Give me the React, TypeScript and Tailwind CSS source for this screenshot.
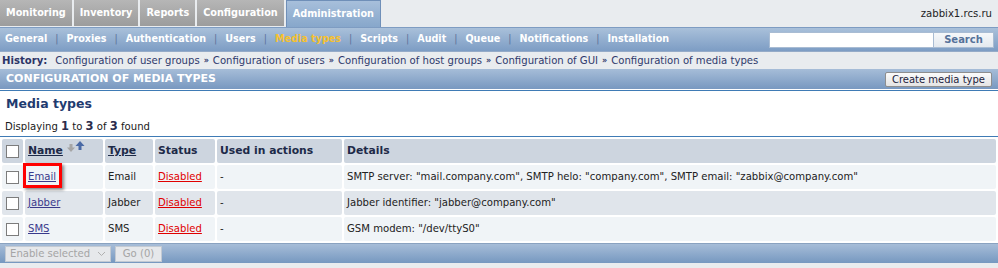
import React from 'react';

const tabs = ['Monitoring', 'Inventory', 'Reports', 'Configuration'];

const navItems = [
  'General',
  'Proxies',
  'Authentication',
  'Users',
  'Media types',
  'Scripts',
  'Audit',
  'Queue',
  'Notifications',
  'Installation',
];

const history = [
  'Configuration of user groups',
  'Configuration of users',
  'Configuration of host groups',
  'Configuration of GUI',
  'Configuration of media types',
];

interface MediaType {
  name: string;
  type: string;
  details: string;
}

const mediaTypes: MediaType[] = [
  {
    name: 'Email',
    type: 'Email',
    details: 'SMTP server: "mail.company.com", SMTP helo: "company.com", SMTP email: "zabbix@company.com"',
  },
  { name: 'Jabber', type: 'Jabber', details: 'Jabber identifier: "jabber@company.com"' },
  { name: 'SMS', type: 'SMS', details: 'GSM modem: "/dev/ttyS0"' },
];

function Checkbox() {
  return <span className="block w-[13px] h-[13px] mx-auto bg-white border border-[#7c7c7c]" />;
}

function SortArrows() {
  return (
    <svg width="19" height="12" viewBox="0 0 19 12" className="inline-block align-top ml-[4px] mt-[-2px]">
      <rect x="2.5" y="3" width="3" height="4" fill="#a6a6a6" />
      <polygon points="0,6.5 8,6.5 4,11" fill="#a6a6a6" />
      <polygon points="8.5,5 17.5,5 13,0" fill="#4a6aa6" />
      <rect x="11.5" y="4" width="3" height="5" fill="#4a6aa6" />
    </svg>
  );
}

export default function App() {
  return (
    <div className="w-[998px] h-[268px] overflow-hidden bg-[#e9ecef] font-['DejaVu_Sans',sans-serif] text-[10.1px] text-[#222]">
      {/* top tabs */}
      <div className="h-[27px] flex items-start justify-between">
        <div className="flex gap-[2px] h-[27px]">
          {tabs.map((t) => (
            <div
              key={t}
              className="h-[26px] px-[6px] flex items-center bg-gradient-to-b from-[#b6b6b6] to-[#9c9c9c] text-white font-bold text-[9.7px]"
            >
              {t}
            </div>
          ))}
          <div className="h-[27px] px-[6px] flex items-center bg-gradient-to-b from-[#a7bfdb] to-[#87a7cb] border border-b-0 border-[#6f8fb8] text-white font-bold text-[9.7px]">
            Administration
          </div>
        </div>
        <div className="h-[27px] flex items-center pr-[6px] text-[#222]">zabbix1.rcs.ru</div>
      </div>

      {/* sub navigation */}
      <div className="h-[24px] flex items-center justify-between bg-gradient-to-b from-[#a9c0da] to-[#7d9dc4] border-t border-[#7e9cc2]">
        <div className="flex items-center pl-[5px] font-bold text-[9.6px]">
          {navItems.map((item, i) => (
            <React.Fragment key={item}>
              {i > 0 && <span className="mx-[8px] font-normal text-[#5d7299]">|</span>}
              <span className={item === 'Media types' ? 'text-[#f6c12f]' : 'text-white'}>{item}</span>
            </React.Fragment>
          ))}
        </div>
        <div className="flex items-center pr-[4px]">
          <div className="w-[165px] h-[16px] bg-white border border-[#a9bcd3]" />
          <button className="w-[60px] h-[16px] bg-gradient-to-b from-[#f6f8fa] to-[#e4e9ef] border border-l-0 border-[#a9bcd3] text-[#55719a] font-bold text-[10px] leading-none">
            Search
          </button>
        </div>
      </div>

      {/* history */}
      <div className="h-[18px] flex items-center pl-[2px] border-t border-[#95abc8] text-[#2f3a6c]">
        <span className="font-bold text-[#2c3466] mr-[8px]">History:</span>
        {history.map((h, i) => (
          <React.Fragment key={h}>
            {i > 0 && <span className="mx-[4px] font-bold text-[8px]">»</span>}
            <span>{h}</span>
          </React.Fragment>
        ))}
      </div>

      {/* section header */}
      <div className="h-[20px] flex items-center justify-between pl-[6px] pr-[6px] bg-gradient-to-b from-[#a6bdd8] to-[#7898c0]">
        <span className="text-white font-bold text-[11px]">CONFIGURATION OF MEDIA TYPES</span>
        <button className="h-[15px] px-[6px] mt-[1px] bg-gradient-to-b from-[#fbfbfb] to-[#e4e4e4] border border-[#8e8e8e] rounded-[2px] text-[#1d1d3d] text-[10px] leading-none">
          Create media type
        </button>
      </div>

      <div className="bg-white pt-[1px]">
        <div className="border-t border-[#3f7bb5]">
          <div className="h-[16px] mt-[5px] pl-[6px] flex items-center text-[#1f3b70] font-bold text-[12.5px]">
            Media types
          </div>
          <div className="h-[14px] mt-[8px] mb-[2px] pl-[5px] flex items-center text-[#1a1a1a]">
            Displaying&nbsp;<b className="text-[11.5px] text-[#2c2c4c]">1</b>&nbsp;to&nbsp;
            <b className="text-[11.5px] text-[#2c2c4c]">3</b>&nbsp;of&nbsp;
            <b className="text-[11.5px] text-[#2c2c4c]">3</b>&nbsp;found
          </div>
        </div>

        <div className="border-t border-[#3f7bb5]">
          <table className="w-full table-fixed border-separate border-spacing-[2px]">
            <thead>
              <tr className="h-[24px] text-left text-[10.8px] font-bold text-[#1d2a48]">
                <th className="w-[21px] bg-[#cdd5df] rounded-[2px]">
                  <Checkbox />
                </th>
                <th className="w-[78px] pl-[3px] bg-[#cdd5df] rounded-[2px] whitespace-nowrap">
                  <span className="underline">Name</span>
                  <SortArrows />
                </th>
                <th className="w-[48px] pl-[3px] bg-[#cdd5df] rounded-[2px]">
                  <span className="underline">Type</span>
                </th>
                <th className="w-[60px] pl-[3px] bg-[#cdd5df] rounded-[2px]">Status</th>
                <th className="w-[125px] pl-[3px] bg-[#cdd5df] rounded-[2px]">Used in actions</th>
                <th className="pl-[3px] bg-[#cdd5df] rounded-[2px]">Details</th>
              </tr>
            </thead>
            <tbody>
              {mediaTypes.map((m, i) => {
                const bg = i % 2 === 0 ? 'bg-[#f0f4f7]' : 'bg-[#e0e5eb]';
                return (
                  <tr key={m.name} className="h-[24px]">
                    <td className={`${bg} rounded-[2px]`}>
                      <Checkbox />
                    </td>
                    <td className={`${bg} rounded-[2px] pl-[3px]`}>
                      <span className="relative inline-block">
                        <a className="underline text-[#3a3a8c] cursor-pointer">{m.name}</a>
                        {i === 0 && (
                          <span className="absolute -left-[5px] -right-[6px] -top-[6px] -bottom-[3px] border-[3px] border-[#ff0000] shadow-[2px_2px_3px_rgba(0,0,0,0.45)]" />
                        )}
                      </span>
                    </td>
                    <td className={`${bg} rounded-[2px] pl-[3px]`}>{m.type}</td>
                    <td className={`${bg} rounded-[2px] pl-[3px]`}>
                      <a className="underline text-[#e00000] cursor-pointer">Disabled</a>
                    </td>
                    <td className={`${bg} rounded-[2px] pl-[3px]`}>-</td>
                    <td className={`${bg} rounded-[2px] pl-[3px] whitespace-nowrap`}>{m.details}</td>
                  </tr>
                );
              })}
            </tbody>
          </table>
        </div>
      </div>

      {/* footer actions */}
      <div className="h-[20px] flex items-center gap-[4px] pl-[5px] bg-gradient-to-b from-[#a7bdd8] to-[#7698c0] border-t border-[#8aa2c0]">
        <div className="w-[106px] h-[16px] flex items-center justify-between px-[4px] bg-[#e6e8eb] border border-[#c3cad3] text-[#a5a5a5]">
          <span>Enable selected</span>
          <svg width="9" height="6" viewBox="0 0 9 6">
            <polyline points="1,1 4.5,4.5 8,1" fill="none" stroke="#b0b0b0" strokeWidth="1" />
          </svg>
        </div>
        <div className="w-[47px] h-[16px] flex items-center justify-center bg-[#e6e8eb] border border-[#c3cad3] text-[#a5a5a5]">
          Go (0)
        </div>
      </div>
    </div>
  );
}
